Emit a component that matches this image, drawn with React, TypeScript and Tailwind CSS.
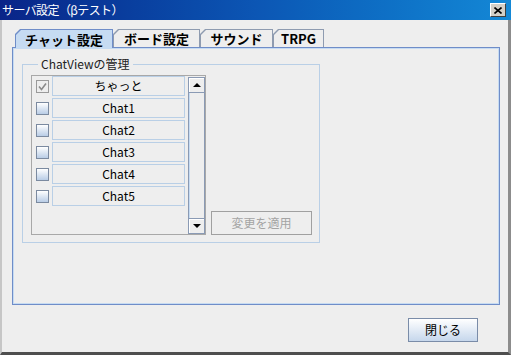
const jp = "font-['Noto_Sans_CJK_JP','Noto_Sans',sans-serif]";

const tabs = [
  { label: "チャット設定", width: "w-[98px]", active: true },
  { label: "ボード設定", width: "w-[87px]", active: false },
  { label: "サウンド", width: "w-[73px]", active: false },
  { label: "TRPG", width: "w-[51px]", active: false },
];

const rows = [
  { name: "ちゃっと", locked: true },
  { name: "Chat1", locked: false },
  { name: "Chat2", locked: false },
  { name: "Chat3", locked: false },
  { name: "Chat4", locked: false },
  { name: "Chat5", locked: false },
];

function Tab({ label, width, active }: { label: string; width: string; active: boolean }) {
  return (
    <div
      className={`${width} [clip-path:polygon(5px_0,100%_0,100%_100%,0_100%,0_5px)] px-[1px] pt-[1px] ${
        active ? "h-[19px] -mb-[1px] relative z-10 bg-[#6f8dc8]" : "h-[18px] bg-[#8e9bb0]"
      }`}
    >
      <div
        className={`h-full [clip-path:polygon(5px_0,100%_0,100%_100%,0_100%,0_5px)] flex items-center justify-center text-[13px] font-bold leading-none text-black ${
          active ? "bg-[#c6dbf2]" : "bg-[#eeeeee]"
        }`}
      >
        {label}
      </div>
    </div>
  );
}

function CheckBox({ locked }: { locked: boolean }) {
  if (locked) {
    return (
      <div className="w-[13px] h-[13px] shrink-0 border border-[#9a9a9a] bg-[#eeeeee] flex items-center justify-center">
        <svg width="9" height="9" viewBox="0 0 9 9">
          <path d="M1 4.5 L3.5 7.5 L8 1.5" fill="none" stroke="#8a8a8a" strokeWidth="1.6" />
        </svg>
      </div>
    );
  }
  return <div className="w-[13px] h-[13px] shrink-0 border border-[#7b8aa0] bg-gradient-to-b from-white to-[#b9cde6]" />;
}

export default function App() {
  return (
    <div className={`w-[511px] h-[355px] flex flex-col bg-[#eeeeee] ${jp}`}>
      {/* title bar */}
      <div className="h-[20px] shrink-0 flex items-center justify-between bg-gradient-to-r from-[#0a2488] via-[#0c56b4] to-[#1488d6] pl-[2px] pr-[5px]">
        <span className="text-white text-[12px] leading-none tracking-[-0.6px]">サーバ設定（βテスト）</span>
        <div className="w-[16px] h-[14px] bg-[#d4d0c8] border border-t-white border-l-white border-r-[#404040] border-b-[#404040] flex items-center justify-center">
          <svg width="8" height="7" viewBox="0 0 8 7">
            <path d="M0.5 0.5 L7.5 6.5 M7.5 0.5 L0.5 6.5" stroke="black" strokeWidth="1.6" />
          </svg>
        </div>
      </div>

      {/* body */}
      <div className="flex-1 flex flex-col border-l-2 border-r-[3px] border-b-[3px] border-l-[#c6c6c6] border-r-[#8c8c8c] border-b-[#4e4e4e] pl-[10px] pt-[9px]">
        <div className="flex items-end h-[18px] ml-[3px]">
          {tabs.map((t) => (
            <Tab key={t.label} {...t} />
          ))}
        </div>

        <div className="w-[488px] h-[258px] border border-[#6f8dc8] shadow-[inset_0_0_0_1px_#c6dbf2] pl-[9px] pt-[9px]">
          <fieldset className="w-[298px] border border-[#b9cfe6] pl-[8px] pr-[7px] pb-[7px]">
            <legend className="ml-[7px] px-[3px] text-[12px] leading-[14px] text-[#222]">ChatViewの管理</legend>
            <div className="flex items-end mt-[4px]">
              <div className="w-[175px] h-[160px] border border-[#a8a8a8] flex pl-[4px]">
                <div className="flex flex-col gap-[2px]">
                  {rows.map((r) => (
                    <div key={r.name} className="flex items-center gap-[3px] h-[20px]">
                      <CheckBox locked={r.locked} />
                      <div className="w-[133px] h-[20px] border border-[#b9cfe6] flex items-center justify-center text-[12px] leading-none text-black">
                        {r.name}
                      </div>
                    </div>
                  ))}
                </div>
                <div className="ml-[3px] mt-[1px] w-[17px] h-[157px] border border-[#8a9ab4] flex flex-col bg-[#eeeeee]">
                  <div className="h-[15px] border-b border-[#8a9ab4] shadow-[inset_1px_1px_0_white] flex items-center justify-center">
                    <div className="w-0 h-0 border-l-[4px] border-r-[4px] border-b-[4px] border-l-transparent border-r-transparent border-b-black" />
                  </div>
                  <div className="flex-1 border-l border-[#c6dbf2]" />
                  <div className="h-[15px] border-t border-[#8a9ab4] shadow-[inset_1px_1px_0_white] flex items-center justify-center">
                    <div className="w-0 h-0 border-l-[4px] border-r-[4px] border-t-[4px] border-l-transparent border-r-transparent border-t-black" />
                  </div>
                </div>
              </div>
              <button className="ml-[5px] w-[101px] h-[24px] border border-[#a0a0a0] text-[12px] leading-none text-[#a4a4a4]">
                変更を適用
              </button>
            </div>
          </fieldset>
        </div>

        <div className="flex justify-end pr-[30px] pt-[13px]">
          <button className="w-[70px] h-[24px] border border-[#7a8ca8] bg-gradient-to-b from-white to-[#c6d7ec] text-[12px] leading-none text-black">
            閉じる
          </button>
        </div>
      </div>
    </div>
  );
}
